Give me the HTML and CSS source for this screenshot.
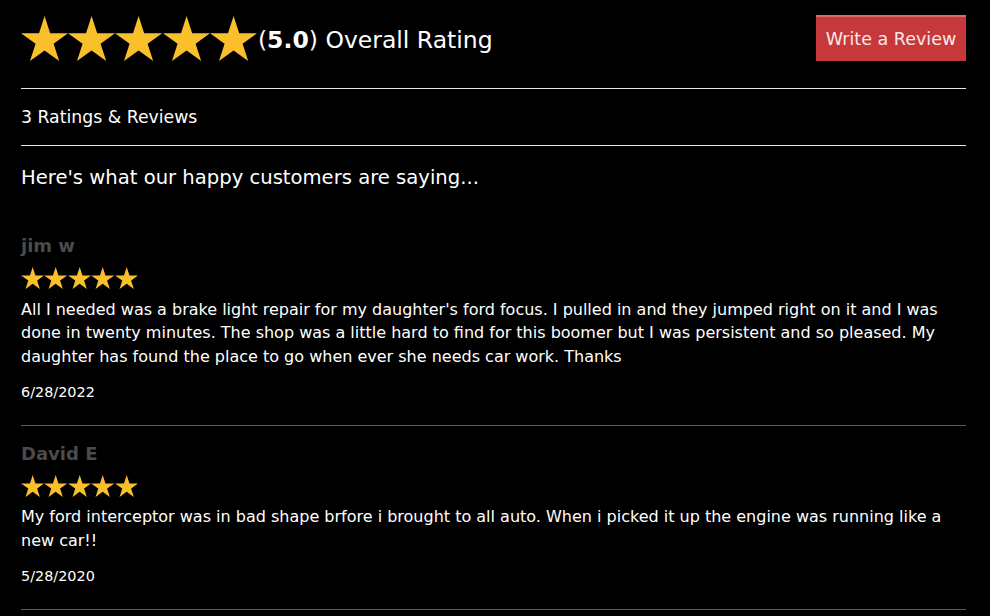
FILE: index.html
```html
<!DOCTYPE html>
<html lang="en">

<head>
    <meta charset="UTF-8">
    <meta name="viewport" content="width=device-width, initial-scale=1.0">
    <title>Reviews</title>
    <link rel="stylesheet" href="styles.css">
</head>

<body>
    <svg width="0" height="0" class="defs">
        <defs>
            <polygon id="star" points="50,0 61.8,36.3 100,36.3 69.1,58.8 80.9,95.1 50,72.7 19.1,95.1 30.9,58.8 0,36.3 38.2,36.3"></polygon>
        </defs>
    </svg>

    <div class="container">
        <header class="top">
            <div class="overall">
                <div class="stars big">
                    <svg viewBox="0 0 100 95"><use href="#star"></use></svg>
                    <svg viewBox="0 0 100 95"><use href="#star"></use></svg>
                    <svg viewBox="0 0 100 95"><use href="#star"></use></svg>
                    <svg viewBox="0 0 100 95"><use href="#star"></use></svg>
                    <svg viewBox="0 0 100 95"><use href="#star"></use></svg>
                </div>
                <h1>(<b>5.0</b>) Overall Rating</h1>
            </div>
            <button class="btn">Write a Review</button>
        </header>

        <div class="count">3 Ratings &amp; Reviews</div>

        <h2 class="intro">Here's what our happy customers are saying...</h2>

        <div class="review">
            <h3 class="name">jim w</h3>
            <div class="stars small">
                <svg viewBox="0 0 100 95"><use href="#star"></use></svg>
                <svg viewBox="0 0 100 95"><use href="#star"></use></svg>
                <svg viewBox="0 0 100 95"><use href="#star"></use></svg>
                <svg viewBox="0 0 100 95"><use href="#star"></use></svg>
                <svg viewBox="0 0 100 95"><use href="#star"></use></svg>
            </div>
            <p class="text">All I needed was a brake light repair for my daughter's ford focus. I pulled in and they jumped right on it and I was done in twenty minutes. The shop was a little hard to find for this boomer but I was persistent and so pleased. My daughter has found the place to go when ever she needs car work. Thanks</p>
            <p class="date">6/28/2022</p>
        </div>

        <div class="review">
            <h3 class="name">David E</h3>
            <div class="stars small">
                <svg viewBox="0 0 100 95"><use href="#star"></use></svg>
                <svg viewBox="0 0 100 95"><use href="#star"></use></svg>
                <svg viewBox="0 0 100 95"><use href="#star"></use></svg>
                <svg viewBox="0 0 100 95"><use href="#star"></use></svg>
                <svg viewBox="0 0 100 95"><use href="#star"></use></svg>
            </div>
            <p class="text">My ford interceptor was in bad shape brfore i brought to all auto. When i picked it up the engine was running like a new car!!</p>
            <p class="date">5/28/2020</p>
        </div>
    </div>

</body>

</html>
```

FILE: styles.css
```css
*,
::before,
::after {
    margin: 0;
    box-sizing: border-box;
}

body {
    font: 16px/1.45 "DejaVu Sans", sans-serif;
    background: #000;
    color: #fff;
}

.defs {
    position: absolute;
}

.container {
    padding: 15px 24px 0 21px;
}

.top {
    display: flex;
    justify-content: space-between;
    align-items: center;
    padding-bottom: 27px;
    border-bottom: 1px solid #e6e6e6;
}

.overall {
    display: flex;
    align-items: center;
}

.stars {
    display: flex;
}

.stars svg {
    fill: #f9c02c;
    display: block;
}

.stars.big svg {
    width: 47.2px;
    height: 45px;
}

.stars.small svg {
    width: 23.4px;
    height: 22px;
}

h1 {
    font-size: 23.5px;
    font-weight: 400;
    margin: 4px 0 0 1px;
}

h1 b {
    font-weight: 700;
}

.btn {
    font: 17.5px "DejaVu Sans", sans-serif;
    color: #f8e8e8;
    background: #c6383a;
    border: 0;
    border-top: 2px solid #d86b6c;
    width: 150px;
    height: 46px;
    cursor: pointer;
}

.count {
    font-size: 17.3px;
    line-height: 25px;
    padding: 16px 0 15px;
    border-bottom: 1px solid #e6e6e6;
}

.intro {
    font-size: 19.6px;
    font-weight: 400;
    line-height: 28.4px;
    padding: 18px 0 41px;
}

.review {
    padding-bottom: 22.5px;
    border-bottom: 1px solid #5a5a5a;
}

.review + .review {
    padding-top: 15px;
}

.name {
    font-size: 18px;
    font-weight: 700;
    color: #4b4b4b;
    line-height: 22.75px;
    padding-top: 2px;
}

.stars.small {
    margin: 9px 0 8.5px;
}

.text {
    max-width: 932px;
    line-height: 23.5px;
}

.date {
    font-size: 14.4px;
    margin-top: 12.5px;
    line-height: 22px;
}
```
